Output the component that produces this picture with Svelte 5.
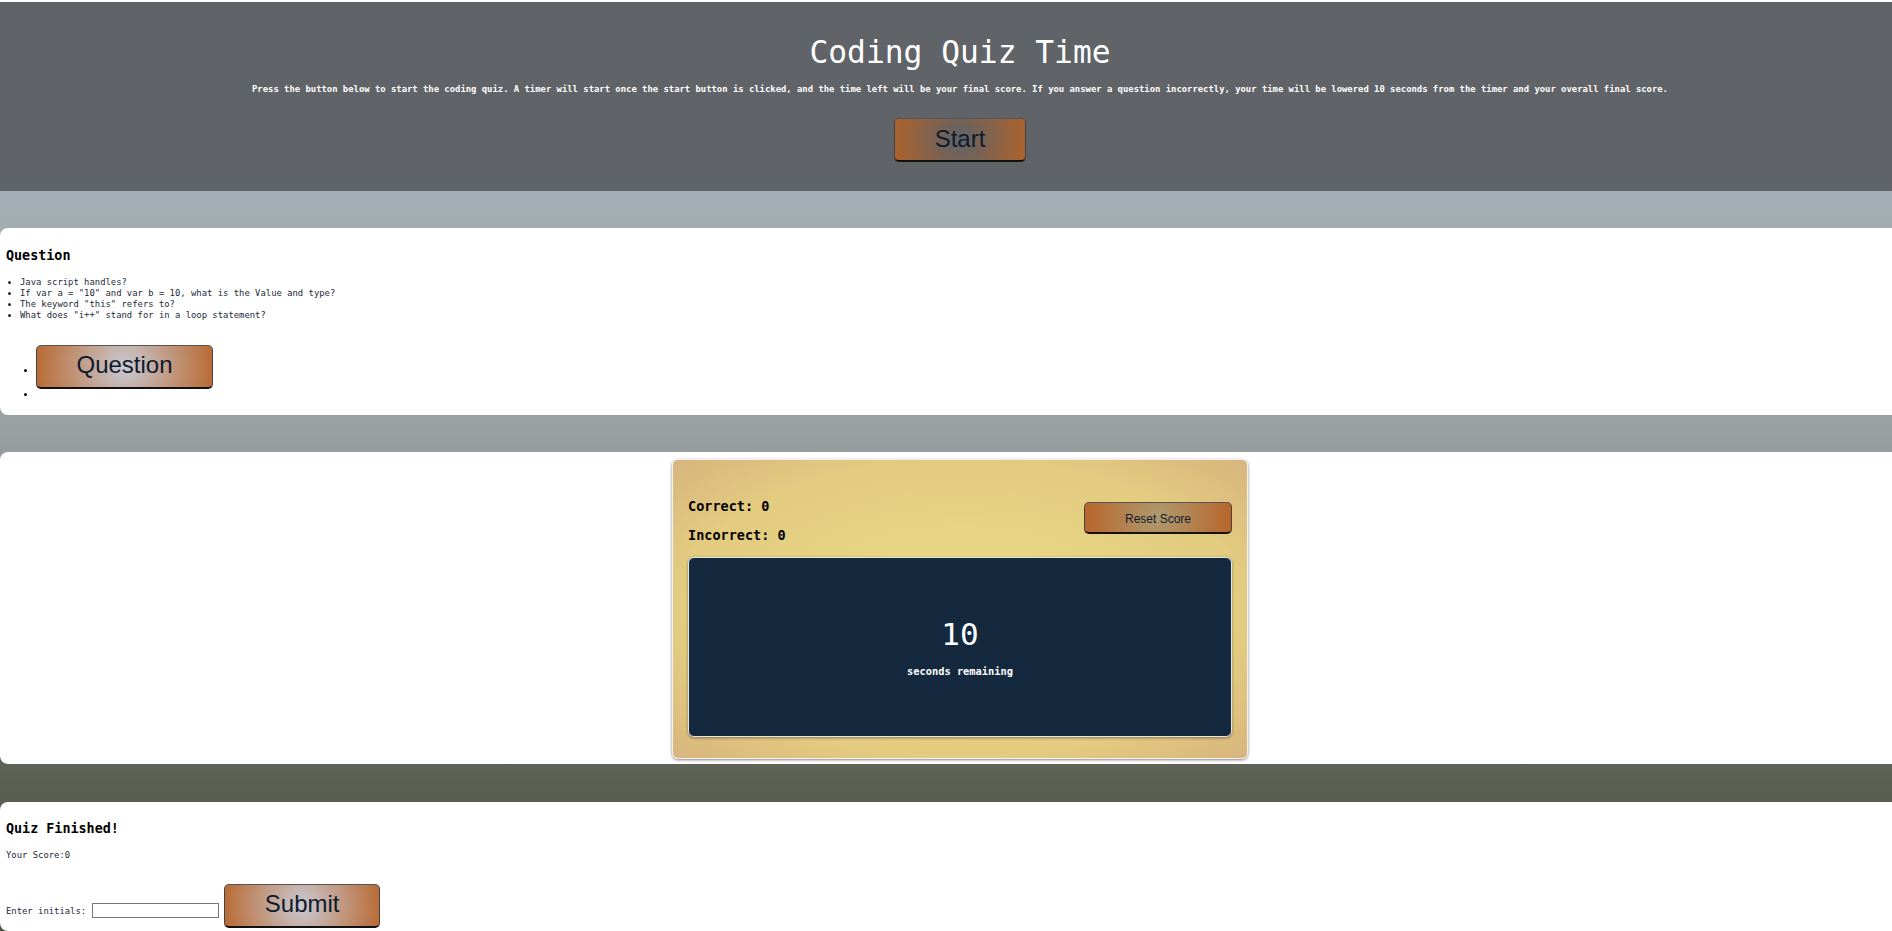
<script>
  const questions = [
    'Java script handles?',
    'If var a = "10" and var b = 10, what is the Value and type?',
    'The keyword "this" refers to?',
    'What does "i++" stand for in a loop statement?',
  ];
  let correct = 0;
  let incorrect = 0;
  let seconds = 10;
  let score = 0;
</script>

<div class="page">
  <header class="intro">
    <h1>Coding Quiz Time</h1>
    <p>Press the button below to start the coding quiz. A timer will start once the start button is clicked, and the time left will be your final score. If you answer a question incorrectly, your time will be lowered 10 seconds from the timer and your overall final score.</p>
    <button class="btn start">Start</button>
  </header>

  <section class="card question">
    <h2>Question</h2>
    <ul class="list">
      {#each questions as q}
        <li>{q}</li>
      {/each}
    </ul>
    <ul class="answers">
      <li><button class="btn">Question</button></li>
      <li></li>
    </ul>
  </section>

  <section class="card center">
    <div class="game">
      <div class="game-top">
        <div class="scores">
          <h3>Correct: {correct}</h3>
          <h3>Incorrect: {incorrect}</h3>
        </div>
        <button class="btn reset">Reset Score</button>
      </div>
      <div class="timer">
        <div class="count">{seconds}</div>
        <div class="label">seconds remaining</div>
      </div>
    </div>
  </section>

  <section class="card done">
    <h2>Quiz Finished!</h2>
    <p>Your Score:{score}</p>
    <div class="form">
      <label for="initials">Enter initials:</label>
      <input id="initials" type="text" />
      <button class="btn">Submit</button>
    </div>
  </section>
</div>

<style>
  :global(body) {
    margin: 0;
    overflow: hidden;
    background: #fff;
  }

  /* the original page runs wider than the window */
  .page {
    width: 1920px;
    height: 929px;
    margin-top: 2px;
    overflow: hidden;
    font-family: "DejaVu Sans Mono", monospace;
    background: linear-gradient(to bottom, #a9b3b9 0%, #a5aeb4 20%, #98a0a2 46%, #5a6053 84%, #50564a 100%);
  }

  .intro {
    height: 189px;
    box-sizing: border-box;
    padding-top: 31px;
    background: #606368;
    color: #fff;
    text-align: center;
  }

  h1 {
    margin: 0;
    font-size: 31.25px;
    line-height: 38px;
    font-weight: 400;
  }

  .intro p {
    margin: 11.5px 0 0;
    font-size: 8.9px;
    line-height: 12px;
    font-weight: 700;
  }

  .btn {
    padding: 0 0 2px;
    font-family: "Liberation Sans", Arial, sans-serif;
    color: #0f1b2d;
    border: 1px solid;
    border-color: #555 #444 #111 #444;
    border-bottom-width: 2px;
    border-radius: 5px;
    background: radial-gradient(circle, #c9c9d2 0%, #b96a33 100%);
    cursor: pointer;
  }

  .start {
    display: block;
    width: 132px;
    height: 44px;
    margin: 23.5px auto 0;
    font-size: 24px;
    background: radial-gradient(circle, #5f6368 0%, #ad622c 100%);
  }

  .card {
    background: #fff;
    border-radius: 8px;
    color: #1e2a3a;
    margin-top: 37px;
  }

  h2 {
    margin: 0;
    font-size: 13.4px;
    line-height: 16px;
    font-weight: 700;
    color: #000;
  }

  .question {
    height: 187px;
    box-sizing: border-box;
    padding: 20px 6px 0;
  }

  .list {
    margin: 12.5px 0 0;
    padding: 0 0 0 14px;
    font-size: 8.9px;
    line-height: 11px;
  }

  .answers {
    margin: 24px 0 0;
    padding: 0 0 0 30px;
    font-size: 9px;
    color: #000;
  }

  .answers li {
    min-height: 11px;
  }

  .answers .btn {
    width: 177px;
    height: 44px;
    font-size: 24px;
  }

  .center {
    height: 312px;
    box-sizing: border-box;
    padding-top: 7px;
  }

  .game {
    width: 576px;
    height: 300px;
    margin: 0 auto;
    box-sizing: border-box;
    padding: 0 15px;
    border: 1px solid #f2f2f2;
    border-radius: 6px;
    box-shadow: 0 1px 3px rgba(0, 0, 0, 0.5);
    background: radial-gradient(ellipse at center, #ede188 0%, #e8d685 25%, #e3cb80 70%, #d8b47d 100%);
  }

  .game-top {
    display: flex;
    justify-content: space-between;
    align-items: flex-start;
    height: 97px;
    box-sizing: border-box;
    padding-top: 32px;
  }

  h3 {
    margin: 0;
    font-size: 13.5px;
    line-height: 29px;
    font-weight: 700;
    color: #000;
  }

  .reset {
    width: 148px;
    height: 32px;
    margin-top: 10px;
    font-size: 12px;
    padding: 2px 0 0;
    background: radial-gradient(circle, #ad9a70 0%, #b9652b 100%);
  }

  .timer {
    height: 180px;
    box-sizing: border-box;
    padding-top: 58px;
    border: 1px solid #e6e6e6;
    border-radius: 6px;
    background: #14293e;
    color: #fff;
    text-align: center;
    box-shadow: 0 1px 3px rgba(0, 0, 0, 0.4);
  }

  .count {
    font-size: 31px;
    line-height: 36px;
  }

  .label {
    margin-top: 12px;
    font-size: 10.35px;
    line-height: 14px;
    font-weight: 700;
  }

  .card.center {
    margin-bottom: 38px;
  }

  .done {
    height: 129px;
    box-sizing: border-box;
    padding: 19px 6px 0;
    margin-top: 0;
  }

  .done p {
    margin: 12.5px 0 0;
    font-size: 8.9px;
    line-height: 11px;
  }

  .form {
    display: flex;
    align-items: flex-end;
    margin-top: 23px;
    font-size: 8.9px;
  }

  .form label {
    margin-bottom: 11px;
    margin-right: 6px;
    line-height: 11px;
  }

  .form input {
    box-sizing: border-box;
    width: 127px;
    height: 15px;
    margin: 0 5px 10px 0;
    padding: 1px 2px;
    border: 1px solid #767676;
    background: #fff;
  }

  .form .btn {
    width: 156px;
    height: 44px;
    font-size: 24px;
  }
</style>
